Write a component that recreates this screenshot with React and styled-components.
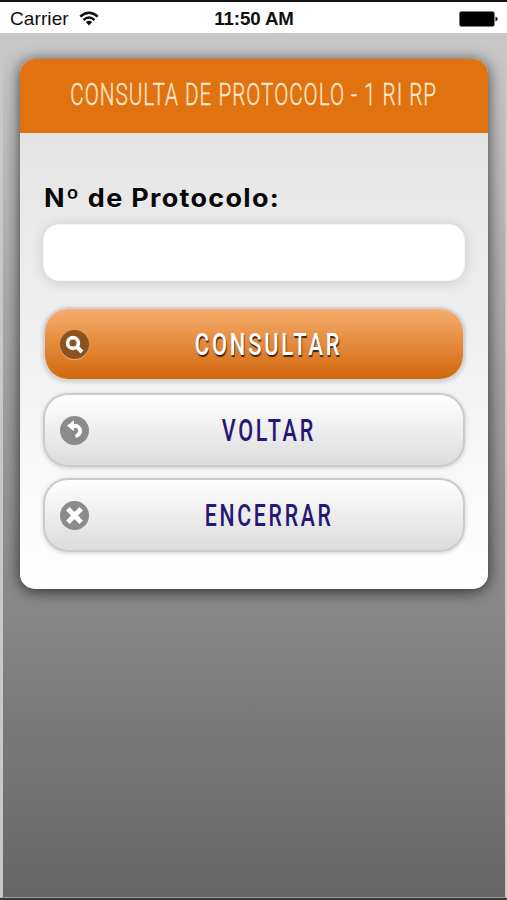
import React from "react";
import styled, { createGlobalStyle, css } from "styled-components";

const GlobalStyle = createGlobalStyle`
  * { box-sizing: border-box; }
  body { margin: 0; }
`;

const Screen = styled.div`
  display: flex;
  flex-direction: column;
  width: 507px;
  height: 900px;
  border-top: 2px solid #111;
  border-bottom: 2px solid #38383a;
  background: #fff;
  overflow: hidden;
`;

const StatusBar = styled.header`
  display: grid;
  grid-template-columns: 1fr auto 1fr;
  align-items: center;
  flex: none;
  height: 31px;
  padding: 2px 9px 0 10px;
  color: #111;
  font: 19px/29px "Liberation Sans", sans-serif;
`;

const Carrier = styled.div`
  display: flex;
  align-items: center;
  gap: 10px;
  letter-spacing: 0.1px;
`;

const Clock = styled.div`
  font-size: 18.7px;
  font-weight: 700;
  letter-spacing: -0.1px;
`;

const StatusEnd = styled.div`
  display: flex;
  justify-content: flex-end;
`;

const Page = styled.main`
  flex: 1;
  padding: 26px 17px 0;
  border: solid #c8c8c8;
  border-width: 0 2px 1px 3px;
  border-bottom-color: #999;
  background: linear-gradient(#c9c9c9, #666);
`;

const Card = styled.section`
  width: 468px;
  height: 530px;
  border-radius: 15px;
  overflow: hidden;
  background: linear-gradient(#e4e4e4 74px, #fff 100%);
  box-shadow: 0 2px 15px rgba(0, 0, 0, 0.7);
`;

const CardHeader = styled.div`
  display: flex;
  align-items: center;
  justify-content: center;
  height: 74px;
  background: #e17210;
`;

const Narrow = styled.span`
  flex: none;
  white-space: nowrap;
  transform: scaleX(${(p) => p.$scale});
`;

const Title = styled.h1`
  display: flex;
  justify-content: center;
  width: 368px;
  margin: 0;
  padding-bottom: 2px;
  color: #ffe9cf;
  font: 300 31px/40px Roboto, sans-serif;
  letter-spacing: 1.5px;
  -webkit-text-stroke: 0.35px #ffe9cf;
`;

const Form = styled.form`
  display: flex;
  flex-direction: column;
  padding: 48px 24px 0;
`;

const Label = styled.label`
  height: 34px;
  color: #080808;
  font: 700 25px/34px Inter, sans-serif;
  letter-spacing: 1.2px;
  text-shadow: 0 1px 0 #f8f8f8;
`;

const LabelText = styled(Narrow)`
  display: inline-block;
  transform-origin: left;
`;

const Field = styled.input`
  width: 422px;
  height: 57px;
  margin: 9px -1px 26px;
  padding: 0 16px;
  border: 1px solid #f6f6f6;
  border-radius: 16px;
  outline: none;
  background: #fff;
  box-shadow: 0 2px 14px rgba(0, 0, 0, 0.14);
  font: 24px Inter, sans-serif;
`;

const Actions = styled.div`
  display: grid;
  grid-auto-rows: 74px;
  gap: 11.5px;
  margin: 0 -1px;
`;

const ActionButton = styled.button`
  display: grid;
  grid-template-columns: 30px 1fr;
  align-items: center;
  width: 422px;
  padding: 1px 0 0 15px;
  border: 2px solid #cbcbcb;
  border-radius: 25px;
  box-shadow: 0 1px 4px rgba(0, 0, 0, 0.18);
  background: linear-gradient(#fff, #dcdcdc);
  color: #251775;
  font: 500 31px/40px Roboto, sans-serif;
  letter-spacing: 4px;
  ${(p) =>
    p.$primary &&
    css`
      border-color: rgba(200, 200, 200, 0.75);
      background: linear-gradient(#f6ad6e, #d1670b) padding-box;
      color: #fff;
      text-shadow: 1px 2px 1px #3c2510;
    `}
`;

const ButtonText = styled.span`
  display: flex;
  justify-content: center;
  min-width: 0;
  padding: 1px 15px 0 0;
`;

const IconDisc = styled.span`
  display: grid;
  place-items: center;
  width: 29px;
  height: 29px;
  border-radius: 50%;
  background: ${(p) => (p.$primary ? "#8b5321" : "#8b8b8b")};
  box-shadow: ${(p) => (p.$primary ? "0 1px 1px rgba(255,210,170,.6)" : "none")};
`;

const icons = {
  search: (
    <g fill="none" stroke="#fff">
      <circle cx="13" cy="13" r="5.4" strokeWidth="3.6" />
      <path d="M16.8 16.8 22 22" strokeWidth="4" />
    </g>
  ),
  back: (
    <g>
      <path d="M12 9.8H14.5A5 5 0 0 1 15.5 20" fill="none" stroke="#fff" strokeWidth="3.8" />
      <path d="M7 9.8 14 4.3V15.3Z" fill="#fff" />
    </g>
  ),
  close: <path d="M7.8 7.8 21.2 21.2M21.2 7.8 7.8 21.2" fill="none" stroke="#fff" strokeWidth="5" />,
};

const actions = [
  { label: "CONSULTAR", icon: "search", scale: 0.705, primary: true },
  { label: "VOLTAR", icon: "back", scale: 0.695 },
  { label: "ENCERRAR", icon: "close", scale: 0.685 },
];

function WifiIcon() {
  return (
    <svg width="20" height="16" viewBox="0 0 20 16" fill="none" stroke="#111" strokeWidth="2.4">
      <path d="M1.2 5.6Q10-2.1 18.8 5.6M4.5 9Q10 4.1 15.5 9" />
      <path d="M6.8 11.1Q10 8.6 13.2 11.1L10 14.5Z" fill="#111" stroke="none" />
    </svg>
  );
}

function BatteryIcon() {
  return (
    <svg width="39" height="16" viewBox="0 0 39 16">
      <rect x="0.4" y="0.5" width="35" height="15" rx="2" fill="#000" stroke="#777" strokeWidth="0.6" />
      <path d="M36.5 5.5Q41 8 36.5 10.5Z" fill="#000" />
    </svg>
  );
}

export default function App() {
  return (
    <Screen>
      <GlobalStyle />
      <StatusBar>
        <Carrier>Carrier <WifiIcon /></Carrier>
        <Clock>11:50 AM</Clock>
        <StatusEnd><BatteryIcon /></StatusEnd>
      </StatusBar>
      <Page>
        <Card>
          <CardHeader>
            <Title><Narrow $scale={0.668}>CONSULTA DE PROTOCOLO - 1 RI RP</Narrow></Title>
          </CardHeader>
          <Form onSubmit={(e) => e.preventDefault()}>
            <Label htmlFor="protocol"><LabelText $scale={1.08}>Nº de Protocolo:</LabelText></Label>
            <Field id="protocol" />
            <Actions>
              {actions.map((a) => (
                <ActionButton key={a.label} type="button" $primary={a.primary}>
                  <IconDisc $primary={a.primary}>
                    <svg width="29" height="29" viewBox="0 0 29 29">{icons[a.icon]}</svg>
                  </IconDisc>
                  <ButtonText><Narrow $scale={a.scale}>{a.label}</Narrow></ButtonText>
                </ActionButton>
              ))}
            </Actions>
          </Form>
        </Card>
      </Page>
    </Screen>
  );
}
